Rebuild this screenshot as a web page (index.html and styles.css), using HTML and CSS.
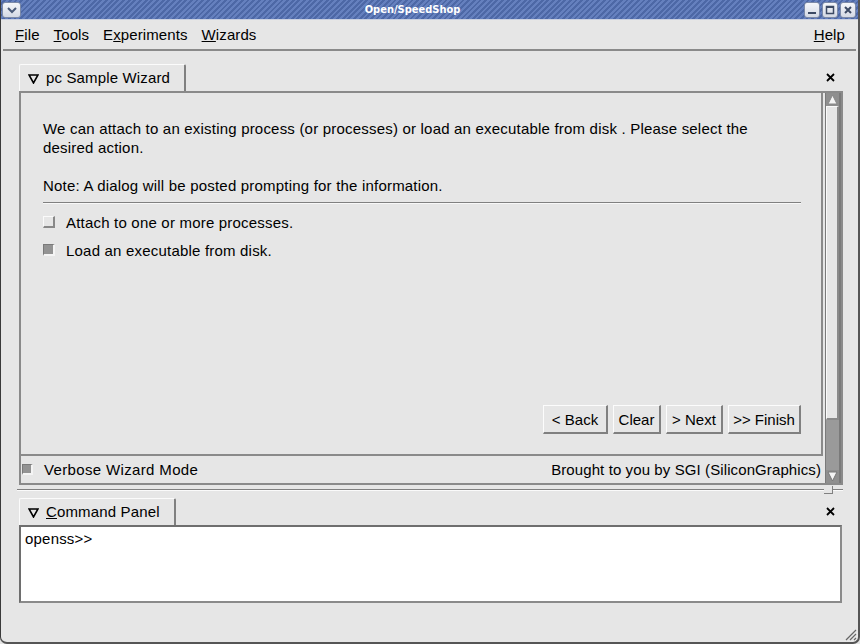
FILE: index.html
```html
<!DOCTYPE html>
<html>
<head>
<meta charset="utf-8">
<title>Open/SpeedShop</title>
<link rel="stylesheet" href="styles.css">
</head>
<body>
<div class="window">
  <div class="titlebar">
    <div class="tbtn tbtn-menu">
      <svg width="12" height="8" viewBox="0 0 12 8"><polyline points="2,2 6,6 10,2" fill="none" stroke="#4a5a78" stroke-width="2"/></svg>
    </div>
    <div class="title">Open/SpeedShop</div>
    <div class="tbtns">
      <div class="tbtn"><svg width="10" height="10" viewBox="0 0 10 10"><rect x="1" y="7" width="8" height="2" fill="#3c4a64"/></svg></div>
      <div class="tbtn"><svg width="10" height="10" viewBox="0 0 10 10"><rect x="1.5" y="1.5" width="7" height="7" fill="none" stroke="#3c4a64" stroke-width="1.5"/><rect x="1" y="1" width="8" height="2" fill="#3c4a64"/></svg></div>
      <div class="tbtn"><svg width="10" height="10" viewBox="0 0 10 10"><path d="M2 2 L8 8 M8 2 L2 8" stroke="#3c4a64" stroke-width="2"/></svg></div>
    </div>
  </div>

  <div class="menubar">
    <span class="menu-item"><u>F</u>ile</span>
    <span class="menu-item"><u>T</u>ools</span>
    <span class="menu-item">E<u>x</u>periments</span>
    <span class="menu-item"><u>W</u>izards</span>
    <span class="menu-spacer"></span>
    <span class="menu-item"><u>H</u>elp</span>
  </div>

  <div class="main">
    <div class="tabrow">
      <div class="tab tab-wizard">
        <svg class="tri" width="11" height="10" viewBox="0 0 11 10"><polygon points="1,1 10,1 5.5,9" fill="none" stroke="#000" stroke-width="1.6"/></svg>
        <span>pc Sample Wizard</span>
      </div>
      <svg class="close" width="9" height="9" viewBox="0 0 9 9"><path d="M1 1 L8 8 M8 1 L1 8" stroke="#000" stroke-width="1.8"/></svg>
    </div>

    <div class="panel">
      <div class="viewport">
        <div class="wizard">
          <p class="desc">We can attach to an existing process (or processes) or load an executable from disk . Please select the desired action.</p>
          <p class="note">Note: A dialog will be posted prompting for the information.</p>
          <div class="sep"></div>
          <div class="opts">
            <div class="opt"><span class="box box-off"></span><span>Attach to one or more processes.</span></div>
            <div class="opt"><span class="box box-on"></span><span>Load an executable from disk.</span></div>
          </div>
          <div class="buttons">
            <button class="btn btn-back">&lt; Back</button>
            <button class="btn btn-clear">Clear</button>
            <button class="btn btn-next">&gt; Next</button>
            <button class="btn btn-finish">&gt;&gt; Finish</button>
          </div>
        </div>
        <div class="verbose">
          <span class="box box-on box-small"></span>
          <span class="verbose-label">Verbose Wizard Mode</span>
          <span class="credit">Brought to you by SGI (SiliconGraphics)</span>
        </div>
      </div>
      <div class="scrollbar">
        <div class="arrow arrow-up"><svg width="11" height="11" viewBox="0 0 11 11"><polygon points="5.5,1 10,10 1,10" fill="#f4f4f4" stroke="#888" stroke-width="1"/></svg></div>
        <div class="slider"></div>
        <div class="trough"></div>
        <div class="arrow arrow-down"><svg width="11" height="11" viewBox="0 0 11 11"><polygon points="1,1 10,1 5.5,10" fill="#f4f4f4" stroke="#777" stroke-width="1"/></svg></div>
      </div>
    </div>

    <div class="splitter"><div class="split-handle"></div></div>

    <div class="tabrow tabrow-cmd">
      <div class="tab tab-cmd">
        <svg class="tri" width="11" height="10" viewBox="0 0 11 10"><polygon points="1,1 10,1 5.5,9" fill="none" stroke="#000" stroke-width="1.6"/></svg>
        <span><u>C</u>ommand Panel</span>
      </div>
      <svg class="close" width="9" height="9" viewBox="0 0 9 9"><path d="M1 1 L8 8 M8 1 L1 8" stroke="#000" stroke-width="1.8"/></svg>
    </div>
    <div class="cmd">openss&gt;&gt;</div>
  </div>

  <div class="grip">
    <svg width="14" height="14" viewBox="0 0 14 14"><path d="M13 3 L3 13 M13 7 L7 13 M13 11 L11 13" stroke="#666" stroke-width="1.2"/></svg>
  </div>
</div>
</body>
</html>
```

FILE: styles.css
```css
* { box-sizing: border-box; }
html, body { margin: 0; padding: 0; }
body {
  width: 860px;
  height: 644px;
  overflow: hidden;
  background: #e6e6e6;
  font-family: "Liberation Sans", Arial, sans-serif;
  font-size: 15px;
  color: #000;
}
.window {
  position: relative;
  width: 860px;
  height: 644px;
  background: #e6e6e6;
  border-left: 1px solid #3a3a3a;
  border-right: 2px solid #555;
  border-bottom: 2px solid #555;
  border-radius: 0 0 7px 7px;
  display: flex;
  flex-direction: column;
}

/* Title bar */
.titlebar {
  height: 20px;
  display: flex;
  align-items: center;
  padding: 0 2px 0 1px;
  background: repeating-linear-gradient(135deg, #6580be 0px, #6580be 2px, #4d68a6 2px, #4d68a6 4px);
  border-bottom: 1px solid #c8cfe0;
}
.title {
  flex: 1;
  text-align: center;
  color: #fff;
  font-family: "DejaVu Sans Condensed", "DejaVu Sans", sans-serif;
  font-stretch: condensed;
  font-weight: bold;
  font-size: 11px;
}
.tbtns { display: flex; gap: 2px; }
.tbtn {
  width: 16px;
  height: 16px;
  border: 1px solid #7c8aa8;
  border-radius: 3px;
  background: linear-gradient(#f4f6fa, #d4d9e4);
  display: flex;
  align-items: center;
  justify-content: center;
}
.tbtn-menu { width: 19px; }

/* Menu bar */
.menubar {
  height: 31px;
  display: flex;
  align-items: center;
  padding: 0 4px 0 5px;
  margin: 0 2px 0 2px;
  border-bottom: 2px solid #8a8a8a;
}
.menu-item { padding: 0 7px; letter-spacing: 0.1px; }
.menu-spacer { flex: 1; }

/* Main area */
.main {
  padding: 13px 15px 0 18px;
  display: flex;
  flex-direction: column;
}
.tabrow {
  height: 27px;
  display: flex;
  align-items: flex-end;
  justify-content: space-between;
}
.tab {
  height: 27px;
  display: flex;
  align-items: center;
  gap: 7px;
  padding-left: 8px;
  padding-bottom: 1px;
  border-top: 1px solid #fbfbfb;
  border-left: 1px solid #fbfbfb;
  border-right: 2px solid #808080;
  border-radius: 2px 2px 0 0;
  letter-spacing: 0.15px;
}
.tab-wizard { width: 167px; }
.tab-cmd { width: 157px; }
.tab .tri { margin-top: 2px; }
.close { margin: 0 8px 9px 0; }

/* Wizard panel */
.panel {
  height: 394px;
  display: flex;
  border: 2px solid #8a8a8a;
}
.viewport {
  flex: 1;
  display: flex;
  flex-direction: column;
}
.wizard {
  height: 363px;
  border-right: 2px solid #8a8a8a;
  border-bottom: 2px solid #8a8a8a;
  padding: 26px 20px 0 22px;
  display: flex;
  flex-direction: column;
  letter-spacing: 0.2px;
}
.desc { margin: 0; line-height: 19px; }
.note { margin: 19px 0 0; line-height: 19px; }
.sep {
  margin-top: 7px;
  height: 1px;
  background: #808080;
  border-bottom: 1px solid #f8f8f8;
  box-sizing: content-box;
}
.opts {
  margin-top: 4px;
  display: flex;
  flex-direction: column;
}
.opt {
  display: flex;
  align-items: center;
  height: 28px;
  gap: 11px;
}
.box {
  width: 12px;
  height: 12px;
  flex: none;
}
.box-off {
  background: #e6e6e6;
  border-top: 1px solid #fafafa;
  border-left: 1px solid #fafafa;
  border-right: 2px solid #888;
  border-bottom: 2px solid #888;
}
.box-on {
  background: #939393;
  border-top: 1px solid #7a7a7a;
  border-left: 1px solid #7a7a7a;
  border-right: 2px solid #f4f4f4;
  border-bottom: 2px solid #f4f4f4;
}
.buttons {
  margin-top: auto;
  margin-bottom: 20px;
  display: flex;
  justify-content: flex-end;
  gap: 5px;
  letter-spacing: 0;
}
.btn {
  height: 29px;
  padding: 0;
  font-family: inherit;
  font-size: 15px;
  color: #000;
  background: #e6e6e6;
  border-top: 1px solid #fcfcfc;
  border-left: 1px solid #fcfcfc;
  border-right: 2px solid #808080;
  border-bottom: 2px solid #808080;
  border-radius: 0;
}
.btn-back { width: 65px; }
.btn-clear { width: 48px; }
.btn-next { width: 57px; }
.btn-finish { width: 73px; }

.verbose {
  height: 27px;
  display: flex;
  align-items: center;
  padding: 0 2px 0 1px;
}
.box-small { width: 11px; height: 11px; }
.verbose-label { margin-left: 11px; letter-spacing: 0.35px; }
.credit { margin-left: auto; letter-spacing: 0.1px; }

/* Scrollbar */
.scrollbar {
  width: 16px;
  margin-left: 2px;
  display: flex;
  flex-direction: column;
  border-left: 1px solid #7a7a7a;
  border-right: 2px solid #7a7a7a;
}
.arrow {
  height: 13px;
  display: flex;
  align-items: center;
  justify-content: center;
  background: #8f8f8f;
}
.slider {
  height: 314px;
  background: #e6e6e6;
  border-top: 1px solid #fafafa;
  border-left: 1px solid #fafafa;
  border-right: 2px solid #8a8a8a;
  border-bottom: 2px solid #8a8a8a;
}
.trough { flex: 1; background: #9a9a9a; }

/* Splitter */
.splitter {
  position: relative;
  height: 11px;
  margin: 0 0 0 -2px;
}
.splitter::before {
  content: "";
  position: absolute;
  left: 0; right: 0; top: 4px;
  height: 1px;
  background: #808080;
  border-bottom: 1px solid #fafafa;
  box-sizing: content-box;
}
.split-handle {
  position: absolute;
  right: 10px;
  top: 1px;
  width: 9px;
  height: 8px;
  border-right: 1px solid #808080;
  border-bottom: 1px solid #808080;
  background: #e6e6e6;
}
.tabrow-cmd { margin-top: 2px; }

/* Command panel */
.cmd {
  height: 78px;
  margin-right: 1px;
  background: #fff;
  border-top: 2px solid #6e6e6e;
  border-left: 2px solid #6e6e6e;
  border-right: 2px solid #8a8a8a;
  border-bottom: 2px solid #8a8a8a;
  padding: 3px 4px;
  line-height: 18px;
  letter-spacing: 0.2px;
}

.grip {
  position: absolute;
  right: 1px;
  bottom: 1px;
  width: 14px;
  height: 14px;
}
```
